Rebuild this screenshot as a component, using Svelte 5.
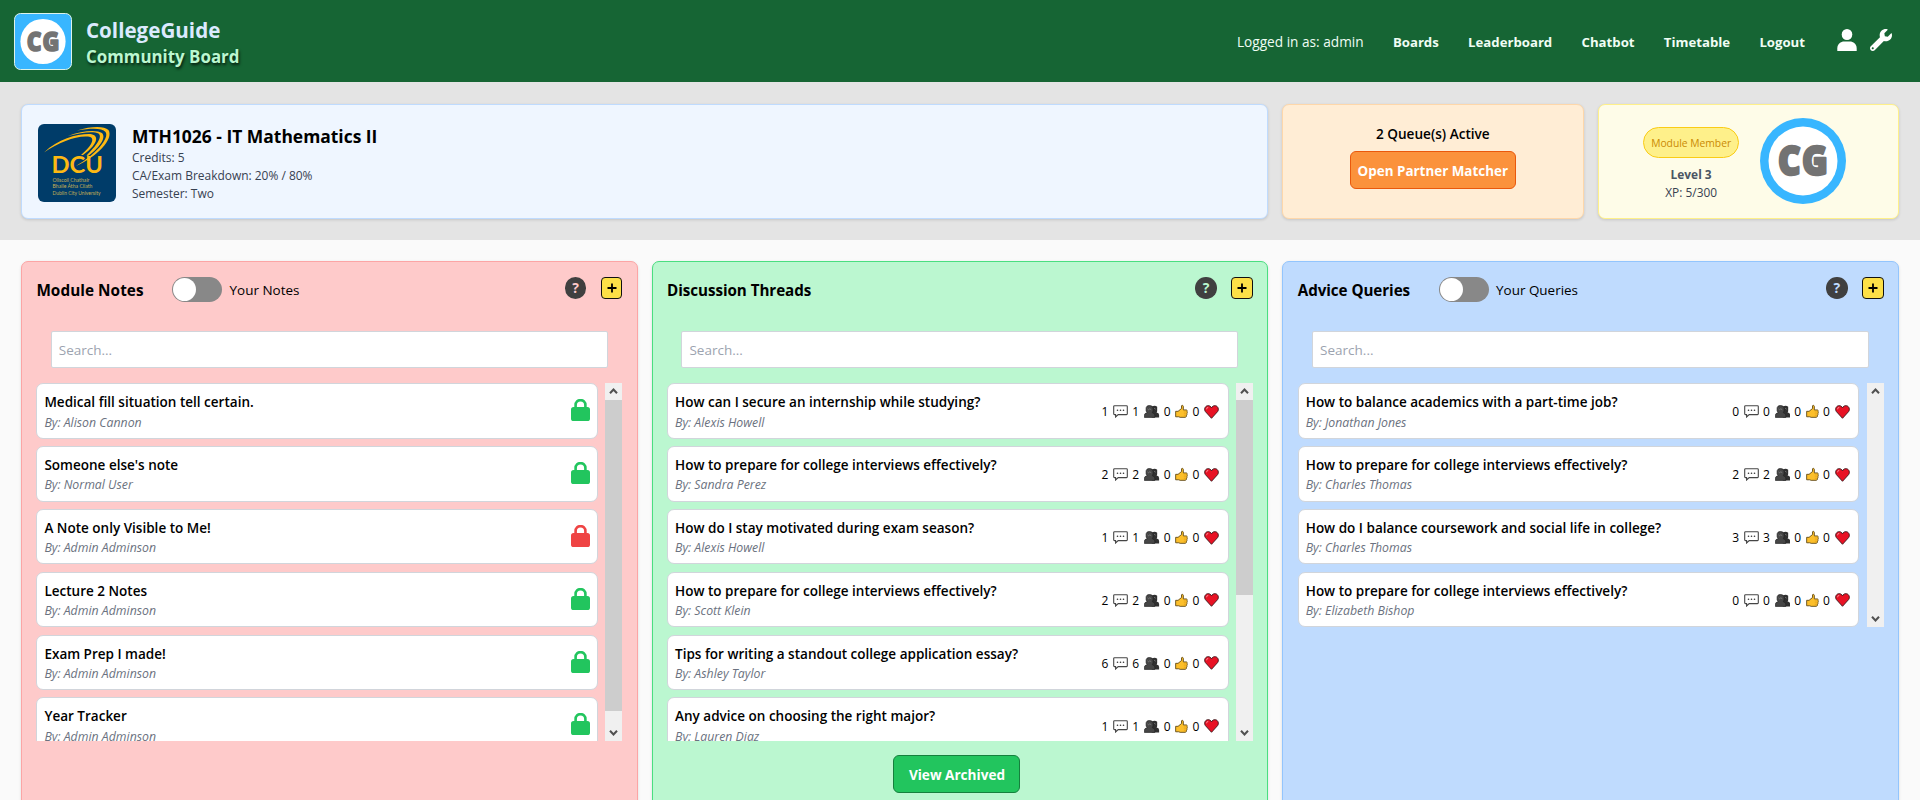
<script>
  const nav = ['Boards', 'Leaderboard', 'Chatbot', 'Timetable', 'Logout'];

  const columns = [
    {
      tone: 'red', title: 'Module Notes', toggle: 'Your Notes', thumb: 311,
      items: [
        { title: 'Medical fill situation tell certain.', by: 'Alison Cannon', lock: 'open' },
        { title: "Someone else's note", by: 'Normal User', lock: 'open' },
        { title: 'A Note only Visible to Me!', by: 'Admin Adminson', lock: 'private' },
        { title: 'Lecture 2 Notes', by: 'Admin Adminson', lock: 'open' },
        { title: 'Exam Prep I made!', by: 'Admin Adminson', lock: 'open' },
        { title: 'Year Tracker', by: 'Admin Adminson', lock: 'open' }
      ]
    },
    {
      tone: 'green', title: 'Discussion Threads', thumb: 195, archived: true,
      items: [
        { title: 'How can I secure an internship while studying?', by: 'Alexis Howell', stats: [1, 1, 0, 0] },
        { title: 'How to prepare for college interviews effectively?', by: 'Sandra Perez', stats: [2, 2, 0, 0] },
        { title: 'How do I stay motivated during exam season?', by: 'Alexis Howell', stats: [1, 1, 0, 0] },
        { title: 'How to prepare for college interviews effectively?', by: 'Scott Klein', stats: [2, 2, 0, 0] },
        { title: 'Tips for writing a standout college application essay?', by: 'Ashley Taylor', stats: [6, 6, 0, 0] },
        { title: 'Any advice on choosing the right major?', by: 'Lauren Diaz', stats: [1, 1, 0, 0] }
      ]
    },
    {
      tone: 'blue', title: 'Advice Queries', toggle: 'Your Queries', thumb: 0,
      items: [
        { title: 'How to balance academics with a part-time job?', by: 'Jonathan Jones', stats: [0, 0, 0, 0] },
        { title: 'How to prepare for college interviews effectively?', by: 'Charles Thomas', stats: [2, 2, 0, 0] },
        { title: 'How do I balance coursework and social life in college?', by: 'Charles Thomas', stats: [3, 3, 0, 0] },
        { title: 'How to prepare for college interviews effectively?', by: 'Elizabeth Bishop', stats: [0, 0, 0, 0] }
      ]
    }
  ];
</script>

{#snippet bubble()}
  <svg width="15" height="13" viewBox="0 0 15 13"><path d="M1.5.7h12a.8.8 0 0 1 .8.8v7.3a.8.8 0 0 1-.8.8H5.2L2.6 12V9.6H1.5a.8.8 0 0 1-.8-.8V1.5a.8.8 0 0 1 .8-.8z" fill="#fff" stroke="#454545" stroke-width="1.1" /><g fill="#333"><circle cx="4.5" cy="5.2" r=".8" /><circle cx="7.5" cy="5.2" r=".8" /><circle cx="10.5" cy="5.2" r=".8" /></g></svg>
{/snippet}

{#snippet people()}
  <svg width="15.500" height="13" viewBox="0 0 16 13"><path d="M8 1.500Q11-.6 13.600 1.500V6Q13.600 7 13 7.500Q15.600 8 15.600 10V12.600H8z" fill="#303030" /><path d="M.4 12.600V10.200Q.4 8.400 3.200 7.800L2.200 6V2.600Q3-.1 5.800.3Q9.400.4 9.400 3.500V6L8.500 7.800Q11.200 8.400 11.200 10.200V12.600z" fill="#464646" stroke="#222" stroke-width=".7" /><path d="M3.600 3.800l1.200.9 1.200-1 1.500 1M10.500 3.200l1.500.9" fill="none" stroke="#858585" stroke-width=".8" /></svg>
{/snippet}

{#snippet like()}
  <svg width="13" height="15" viewBox="0 0 14 15"><path d="M.7 7.300H3.300L7 4.300V1.500C7 .6 8.900.5 9 2.200V5.800H12.300Q13.500 6.200 13 7.400Q13.600 8.500 12.900 9.500Q13.200 10.700 12.500 11.400Q12.600 13.600 11 13.800H5.500L4 13.200H.7z" fill="#fcbf2b" stroke="#57400d" stroke-width=".9" stroke-linejoin="round" /><path d="M9.500 8h3M9.500 10h3M9.500 12h2.600" stroke="#e3a21a" stroke-width=".8" /></svg>
{/snippet}

{#snippet heart()}
  <svg width="15" height="14" viewBox="0 0 15 14"><path d="M7.500 13.300L1.400 6.600C-.2 4.500.9 1.100 3.600.7 5.400.4 6.900 1.400 7.500 2.900 8.100 1.400 9.600.4 11.400.7 14.100 1.100 15.200 4.500 13.600 6.600z" fill="#e81224" stroke="#3a1014" stroke-width=".9" /><path d="M2.500 4.300Q2.600 2.400 4.300 2.300" fill="none" stroke="#f8858f" stroke-width="1" /></svg>
{/snippet}

<header class="top">
  <div class="brand">
    <svg class="logo" width="58" height="57" viewBox="0 0 58 57">
      <rect x=".5" y=".5" width="57" height="56" rx="6" fill="#38b6ff" stroke="#dcf3ea" />
      <circle cx="29" cy="28.500" r="22.600" fill="#fff" />
      <text class="cg" x="12.800" y="38" font-size="27" textLength="33.500" lengthAdjust="spacingAndGlyphs" letter-spacing="1" stroke-width="1.500">CG</text>
    </svg>
    <div class="names">
      <div class="name">CollegeGuide</div>
      <div class="sub">Community Board</div>
    </div>
  </div>
  <nav>
    <span class="who">Logged in as: admin</span>
    {#each nav as label}<a href="#top">{label}</a>{/each}
    <span class="tools">
      <svg width="20" height="22" viewBox="0 0 20 22" fill="#fff"><ellipse cx="10" cy="5.500" rx="5.300" ry="5.500" /><path d="M.3 22v-2.500C.3 15 3.800 12.600 7.200 12.600h5.600c3.400 0 6.900 2.400 6.900 6.900V22z" /></svg>
      <svg width="22" height="22" viewBox="0 0 512 512" fill="#fff"><path d="M507.700 109.100c-2.200-9-13.500-12.100-20.100-5.500l-74.400 74.400-67.900-11.300L334 98.900l74.400-74.400c6.600-6.600 3.400-17.900-5.700-20.200-47.400-11.700-99.600.9-136.600 37.900-39.600 39.600-50.500 97.100-34.100 147.200L18.700 402.800c-25 25-25 65.500 0 90.500s65.500 25 90.500 0l213.200-213.200c50.100 16.700 107.500 5.700 147.400-34.200 37.100-37.100 49.700-89.300 37.900-136.700zM64 472c-13.300 0-24-10.700-24-24s10.700-24 24-24 24 10.700 24 24-10.700 24-24 24z" /></svg>
    </span>
  </nav>
</header>

<section class="hero">
  <div class="panel module">
    <svg class="crest" width="78" height="78" viewBox="0 0 78 78">
      <rect width="78" height="78" rx="6" fill="#003c69" />
      <g fill="#fdb913">
        <path d="M6 28.500C20 15 38 10 51 10C61 10 62 19 45 31L43 31C56 20 57 13 50 12.500C38 11.500 21 18 6 28.500z" />
        <path d="M30 12C44 6.500 59 5.500 64 9C69 14 60 25 50 32L48.500 31.500C58 22 65 13 60.500 9.500C56 7 44 8 30 12z" />
        <path d="M39 6.500C54 2 66 2 70.500 6C76 15 59 33 38 42C57 31 72 14 67.500 8C64 4 54 4 39 6.500z" />
      </g>
      <text class="dcu" x="13.500" y="49.300" textLength="51.500" lengthAdjust="spacingAndGlyphs">DCU</text>
      <g class="uni">
        <text x="14.500" y="58" textLength="37" lengthAdjust="spacingAndGlyphs">Ollscoil Chathair</text>
        <text x="14.500" y="64.200" textLength="40" lengthAdjust="spacingAndGlyphs">Bhaile Átha Cliath</text>
        <text x="14.500" y="70.500" textLength="48" lengthAdjust="spacingAndGlyphs">Dublin City University</text>
      </g>
    </svg>
    <div>
      <h1>MTH1026 - IT Mathematics II</h1>
      <p>Credits: 5</p>
      <p>CA/Exam Breakdown: 20% / 80%</p>
      <p>Semester: Two</p>
    </div>
  </div>
  <div class="panel queue">
    <div class="active">2 Queue(s) Active</div>
    <button class="match">Open Partner Matcher</button>
  </div>
  <div class="panel member">
    <div class="rank">
      <span class="pill">Module Member</span>
      <strong>Level 3</strong>
      <span>XP: 5/300</span>
    </div>
    <svg class="badge" width="86" height="86" viewBox="0 0 86 86">
      <circle cx="43" cy="43" r="43" fill="#38b6ff" />
      <circle cx="43" cy="43" r="34.500" fill="#fff" />
      <text class="cg" x="18" y="57.300" font-size="41" textLength="51" lengthAdjust="spacingAndGlyphs" letter-spacing="1.500" stroke-width="2.400">CG</text>
    </svg>
  </div>
</section>

<main>
  {#each columns as c}
    <section class="col {c.tone}">
      <div class="head">
        <h2>{c.title}</h2>
        {#if c.toggle}
          <span class="switch"><i></i></span>
          <span class="label">{c.toggle}</span>
        {/if}
        <div class="actions">
          <span class="help">?</span>
          <span class="add"><svg width="10" height="10" viewBox="0 0 10 10"><path d="M5 .5v9M.5 5h9" stroke="#000" stroke-width="1.800" /></svg></span>
        </div>
      </div>
      <input placeholder="Search..." aria-label={c.title} />
      <div class="scroll">
        <div class="list">
          {#each c.items as it}
            <article>
              <div>
                <h3>{it.title}</h3>
                <p>By: {it.by}</p>
              </div>
              {#if it.lock}
                <svg class="lock {it.lock}" width="19" height="22" viewBox="0 0 19 22"><path d="M4.600 9V6a4.900 4.900 0 0 1 9.800 0v3" fill="none" stroke="currentColor" stroke-width="2.600" /><rect y="8" width="19" height="14" rx="2.600" fill="currentColor" /></svg>
              {:else}
                <div class="stats">
                  <span>{it.stats[0]}</span>{@render bubble()}
                  <span>{it.stats[1]}</span>{@render people()}
                  <span>{it.stats[2]}</span>{@render like()}
                  <span>{it.stats[3]}</span>{@render heart()}
                </div>
              {/if}
            </article>
          {/each}
        </div>
        <div class="bar">
          <svg width="17" height="17" viewBox="0 0 17 17"><path d="M5 10.300L8.500 6.500 12 10.300" fill="none" stroke="#505050" stroke-width="2" /></svg>
          <div class="track"><div class="thumb" style="height:{c.thumb}px"></div></div>
          <svg width="17" height="17" viewBox="0 0 17 17"><path d="M5 6.700L8.500 10.500 12 6.700" fill="none" stroke="#505050" stroke-width="2" /></svg>
        </div>
      </div>
      {#if c.archived}<button class="archive">View Archived</button>{/if}
    </section>
  {/each}
</main>

<style>
  :global(body) { margin: 0; background: #fafafa; overflow: hidden; }
  :global(#app) { height: 800px; overflow: hidden; font-family: 'Open Sans', 'Noto Sans', sans-serif; font-size: 13.5px; color: #000; }
  :global(*) { box-sizing: border-box; }
  h1, h2, h3, p { margin: 0; }
  svg { display: block; flex: none; }
  button { font: inherit; font-weight: 700; color: #fff; padding: 0; }

  .top { height: 82px; background: #166534; display: flex; justify-content: space-between; align-items: center; padding: 0 28px 0 14px; }
  .brand { display: flex; align-items: center; gap: 14px; }
  .names { padding-top: 4px; }
  .name { font-size: 20.600px; line-height: 27px; font-weight: 700; color: #dbeafe; white-space: nowrap; }
  .sub { font-size: 16.900px; line-height: 25px; font-weight: 700; color: #bbf7d0; text-shadow: 1px 2px 3px rgba(0, 0, 0, .75); white-space: nowrap; }
  .cg { font-family: 'Open Sans', sans-serif; font-weight: 800; fill: #737373; stroke: #737373; stroke-linejoin: round; }
  nav { display: flex; align-items: center; gap: 29.300px; color: #fff; padding-top: 1px; }
  nav a { color: #f0fdf4; text-decoration: none; font-weight: 700; font-size: 13.200px; }
  .who { font-size: 13.650px; color: #f0fdf4; }
  .tools { display: flex; gap: 13px; margin: -4px 0 0 2.700px; }

  .hero { height: 158px; background: #e4e4e4; padding: 22px 21px 20px; display: grid; grid-template-columns: 1247.300px 302px 1fr; gap: 14px; }
  .panel { height: 115px; border: 1px solid; border-radius: 7px; display: flex; align-items: center; box-shadow: 0 1px 3px rgba(0, 0, 0, .14); }
  .module { background: #eff6ff; border-color: #bfdbfe; padding-left: 16px; gap: 16px; padding-top: 3px; }
  .dcu { font-family: Lato, sans-serif; font-weight: 700; font-size: 23px; fill: #fdb913; }
  .uni text { font-family: Lato, sans-serif; font-size: 5.900px; fill: #c4b054; }
  h1 { font-size: 17.450px; line-height: 25px; font-weight: 700; }
  .module p { font-size: 11.960px; line-height: 18px; color: #374151; }
  .queue { background: #ffedd5; border-color: #fed7aa; flex-direction: column; padding-top: 19px; padding-right: 1px; }
  .active { font-size: 13.600px; font-weight: 600; line-height: 20px; margin-bottom: 7px; }
  .match { width: 166px; height: 38px; border: 1px solid #ea580c; border-radius: 6px; background: #fb923c; font-size: 13.420px; padding-top: 1px; }
  .member { background: #fefce8; border-color: #fef08a; justify-content: center; gap: 21px; padding-right: 8px; }
  .badge { margin-top: -2px; }
  .rank { display: flex; flex-direction: column; align-items: center; color: #374151; font-size: 11.900px; line-height: 18px; padding-top: 5px; }
  .rank strong { color: #4b5563; }
  .pill { width: 96px; height: 31px; border-radius: 16px; background: #fef08a; border: 1px solid #facc15; color: #ca8a04; font-size: 10.300px; line-height: 31px; text-align: center; margin-bottom: 7px; }

  main { display: grid; grid-template-columns: repeat(3, 1fr); gap: 14px; padding: 21px 21px 0; }
  .col { height: 600px; border: 1px solid; border-radius: 7px; padding: 15px 14.400px 0; box-shadow: 0 1px 3px rgba(0, 0, 0, .12); min-width: 0; }
  .red { background: #fecaca; border-color: #fca5a5; }
  .green { background: #bbf7d0; border-color: #4ade80; }
  .blue { background: #bfdbfe; border-color: #93c5fd; }
  .head { height: 54px; display: flex; align-items: flex-start; }
  h2 { font-size: 15.300px; line-height: 26px; font-weight: 700; white-space: nowrap; }
  .red h2 { letter-spacing: .06px; }
  .green h2, .blue h2 { font-size: 15.200px; letter-spacing: -.06px; }
  .switch { width: 50px; height: 25px; border-radius: 13px; background: #888; margin-left: 28.500px; padding: 1px; }
  .switch i { display: block; width: 23px; height: 23px; border-radius: 50%; background: #fff; }
  .label { margin-left: 7.500px; line-height: 26px; font-size: 13.450px; }
  .actions { margin-left: auto; display: flex; gap: 14.500px; }
  .help { width: 21.500px; height: 21.500px; border-radius: 50%; background: #404040; font-weight: 700; font-size: 14px; line-height: 21px; text-align: center; }
  .red .help { color: #fecaca; }
  .green .help { color: #bbf7d0; }
  .blue .help { color: #bfdbfe; }
  .add { width: 21.500px; height: 21.500px; border: 1.500px solid #111; border-radius: 4px; background: #fde047; display: flex; align-items: center; justify-content: center; }
  input { display: block; width: calc(100% - 29px); height: 36.500px; margin: 0 0 15.500px 14.400px; border: 1px solid #d1d5db; border-radius: 2px; background: #fff; padding: 1px 7px 0; font: 13.500px 'Open Sans', sans-serif; }
  input::placeholder { color: #9ca3af; opacity: 1; }
  .scroll { display: flex; gap: 7.200px; max-height: 358px; overflow: hidden; }
  .list { flex: 1; min-width: 0; display: flex; flex-direction: column; gap: 7.200px; }
  article { flex: none; height: 55.700px; background: #fff; border: 1px solid #d1d5db; border-radius: 7px; padding: 7px 7px 0; display: flex; justify-content: space-between; }
  h3 { font-size: 13.530px; line-height: 22.500px; font-weight: 600; white-space: nowrap; }
  article p { font-size: 12.300px; line-height: 17px; font-style: italic; color: #6b7280; white-space: nowrap; }
  .lock { margin-top: 8px; }
  .open { color: #22c55e; }
  .private { color: #ef4444; }
  .stats { display: flex; align-items: center; height: 41.500px; font-size: 12px; padding-right: 1.600px; }
  .stats span { margin-right: 4.900px; }
  .stats svg { margin-right: 4px; }
  .stats svg:last-child { margin-right: 0; }
  .bar { width: 17px; background: #f0f0f0; display: flex; flex-direction: column; }
  .track { flex: 1; min-height: 0; }
  .thumb { background: #cdcdcd; }
  .archive { display: block; width: 127px; height: 38px; margin: 14px auto 0; border: 1px solid #15803d; border-radius: 6px; background: #22c55e; font-size: 13.600px; transform: translateX(-3px); }
</style>
